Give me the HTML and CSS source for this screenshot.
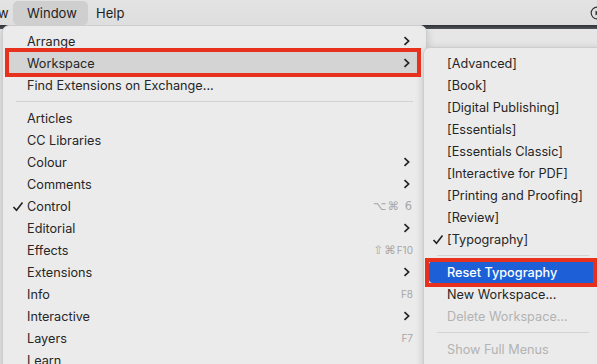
FILE: index.html
```html
<!DOCTYPE html>
<html>
<head>
<meta charset="utf-8">
<link rel="stylesheet" href="styles.css">
</head>
<body>
<div class="menubar">
  <span class="mb-item mb-cut">w</span>
  <span class="mb-item mb-active">Window</span>
  <span class="mb-item mb-help">Help</span>
  <span class="mb-spacer"></span>
  <svg class="mb-icon" width="14" height="14" viewBox="0 0 14 14"><circle cx="7" cy="7" r="5.8" fill="none" stroke="#333" stroke-width="1.2"/><path d="M5.5 4.5 L9.5 7 L5.5 9.5 Z" fill="#333"/></svg>
</div>
<div class="stage">
  <div class="darkstrip"></div>

  <div class="menu main">
    <div class="row"><span class="chk"></span><span class="lbl">Arrange</span><span class="chev"><svg width="7" height="10" viewBox="0 0 7 10"><path d="M1.5 1.2 L5.6 5 L1.5 8.8" fill="none" stroke="#222" stroke-width="1.7"/></svg></span></div>
    <div class="row hover"><span class="chk"></span><span class="lbl">Workspace</span><span class="chev"><svg width="7" height="10" viewBox="0 0 7 10"><path d="M1.5 1.2 L5.6 5 L1.5 8.8" fill="none" stroke="#222" stroke-width="1.7"/></svg></span></div>
    <div class="row"><span class="chk"></span><span class="lbl">Find Extensions on Exchange...</span></div>
    <div class="sep"></div>
    <div class="row"><span class="chk"></span><span class="lbl">Articles</span></div>
    <div class="row"><span class="chk"></span><span class="lbl">CC Libraries</span></div>
    <div class="row"><span class="chk"></span><span class="lbl">Colour</span><span class="chev"><svg width="7" height="10" viewBox="0 0 7 10"><path d="M1.5 1.2 L5.6 5 L1.5 8.8" fill="none" stroke="#222" stroke-width="1.7"/></svg></span></div>
    <div class="row"><span class="chk"></span><span class="lbl">Comments</span><span class="chev"><svg width="7" height="10" viewBox="0 0 7 10"><path d="M1.5 1.2 L5.6 5 L1.5 8.8" fill="none" stroke="#222" stroke-width="1.7"/></svg></span></div>
    <div class="row"><span class="chk"><svg width="12" height="11" viewBox="0 0 12 11"><path d="M1.5 6 L4.5 9.2 L10.5 1.5" fill="none" stroke="#222" stroke-width="1.6"/></svg></span><span class="lbl">Control</span><span class="sc">⌥⌘ 6</span></div>
    <div class="row"><span class="chk"></span><span class="lbl">Editorial</span><span class="chev"><svg width="7" height="10" viewBox="0 0 7 10"><path d="M1.5 1.2 L5.6 5 L1.5 8.8" fill="none" stroke="#222" stroke-width="1.7"/></svg></span></div>
    <div class="row"><span class="chk"></span><span class="lbl">Effects</span><span class="sc">⇧⌘<small>F10</small></span></div>
    <div class="row"><span class="chk"></span><span class="lbl">Extensions</span><span class="chev"><svg width="7" height="10" viewBox="0 0 7 10"><path d="M1.5 1.2 L5.6 5 L1.5 8.8" fill="none" stroke="#222" stroke-width="1.7"/></svg></span></div>
    <div class="row"><span class="chk"></span><span class="lbl">Info</span><span class="sc"><small>F8</small></span></div>
    <div class="row"><span class="chk"></span><span class="lbl">Interactive</span><span class="chev"><svg width="7" height="10" viewBox="0 0 7 10"><path d="M1.5 1.2 L5.6 5 L1.5 8.8" fill="none" stroke="#222" stroke-width="1.7"/></svg></span></div>
    <div class="row"><span class="chk"></span><span class="lbl">Layers</span><span class="sc"><small>F7</small></span></div>
    <div class="row"><span class="chk"></span><span class="lbl">Learn</span></div>
  </div>

  <div class="menu sub">
    <div class="row"><span class="chk"></span><span class="lbl">[Advanced]</span></div>
    <div class="row"><span class="chk"></span><span class="lbl">[Book]</span></div>
    <div class="row"><span class="chk"></span><span class="lbl">[Digital Publishing]</span></div>
    <div class="row"><span class="chk"></span><span class="lbl">[Essentials]</span></div>
    <div class="row"><span class="chk"></span><span class="lbl">[Essentials Classic]</span></div>
    <div class="row"><span class="chk"></span><span class="lbl">[Interactive for PDF]</span></div>
    <div class="row"><span class="chk"></span><span class="lbl">[Printing and Proofing]</span></div>
    <div class="row"><span class="chk"></span><span class="lbl">[Review]</span></div>
    <div class="row"><span class="chk"><svg width="12" height="11" viewBox="0 0 12 11"><path d="M1.5 6 L4.5 9.2 L10.5 1.5" fill="none" stroke="#222" stroke-width="1.6"/></svg></span><span class="lbl">[Typography]</span></div>
    <div class="sep"></div>
    <div class="row selected"><span class="chk"></span><span class="lbl">Reset Typography</span></div>
    <div class="row"><span class="chk"></span><span class="lbl">New Workspace...</span></div>
    <div class="row disabled"><span class="chk"></span><span class="lbl">Delete Workspace...</span></div>
    <div class="sep"></div>
    <div class="row disabled"><span class="chk"></span><span class="lbl">Show Full Menus</span></div>
  </div>

  <div class="mark mark-workspace"></div>
  <div class="mark mark-reset"></div>
</div>
</body>
</html>
```

FILE: styles.css
```css
* { box-sizing: border-box; }
html, body { margin: 0; padding: 0; }
body {
  width: 597px;
  height: 364px;
  overflow: hidden;
  background: #e4e4e4;
  font-family: Inter, "Noto Sans", "Liberation Sans", sans-serif;
  color: #262626;
}
.menubar {
  height: 25px;
  display: flex;
  align-items: center;
  background: linear-gradient(#e3e3e3, #dedede);
  font-size: 13px;
  color: #1e1e1e;
}
.mb-item { height: 24px; display: flex; align-items: center; }
.mb-cut { width: 15px; margin-left: -2px; }
.mb-active {
  background: #cfcfcf;
  border-radius: 5px;
  padding: 0 14px;
  width: 75px;
}
.mb-help { margin-left: 8px; }
.mb-spacer { flex: 1; }
.mb-icon { margin-right: -7px; }
.stage {
  position: relative;
  height: 339px;
  overflow: hidden;
  background: #e6e6e6;
}
.darkstrip {
  height: 4px;
  background: linear-gradient(#2f3236, #50545a);
}
.menu {
  position: absolute;
  background: #ebebeb;
  border: 1px solid #cdcdcd;
  border-radius: 7px;
  padding: 4px 0 0;
  box-shadow: 0 2px 8px rgba(0,0,0,0.18);
  font-size: 12.7px;
}
.main { left: 2px; top: 0; width: 425px; height: 360px; }
.sub { left: 423px; top: 22px; width: 180px; height: 330px; }
.row {
  height: 22px;
  display: flex;
  align-items: center;
  margin: 0 5px;
  border-radius: 4px;
  padding-right: 8px;
}
.chk { width: 19px; flex: none; display: flex; align-items: center; justify-content: center; padding-left: 1px; }
.lbl { flex: 1; white-space: nowrap; }
.sub .chk { width: 18px; padding-left: 0; }
.chev { display: flex; align-items: center; margin-right: 3px; }
.sc { color: #a6a6a6; font-family: "DejaVu Sans", sans-serif; font-size: 11.5px; letter-spacing: 1px; }
.sc small { font-family: Inter, sans-serif; font-size: 10px; letter-spacing: 0; }
.hover { background: #d4d4d4; }
.selected { background: #1c5fd6; color: #fff; font-weight: 500; margin: 0 4px 0 5px; }
.disabled { color: #b3b3b3; }
.sep {
  height: 11px;
  margin: 0 13px;
  display: flex;
  align-items: center;
}
.sep::before { content: ""; flex: 1; height: 1px; background: #d3d3d3; }
.mark {
  position: absolute;
  border: 4px solid #e8311c;
}
.mark-workspace { left: 5px; top: 23px; width: 416px; height: 29px; }
.mark-reset { left: 425px; top: 233px; width: 172px; height: 29px; }
```
